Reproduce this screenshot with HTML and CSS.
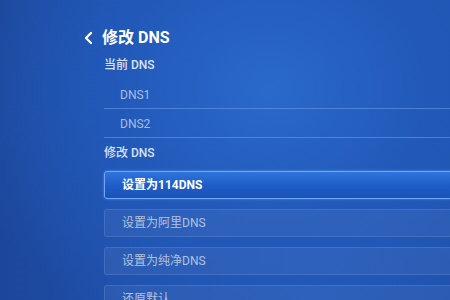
FILE: index.html
```html
<!DOCTYPE html>
<html lang="zh-CN">
<head>
<meta charset="utf-8">
<link rel="stylesheet" href="styles.css">
</head>
<body>
<div class="screen">
  <header class="header">
    <svg class="back" width="10" height="14" viewBox="0 0 10 14"><polyline points="8,2 3,7 8,12" fill="none" stroke="#fff" stroke-width="2.3" stroke-linecap="round" stroke-linejoin="round"/></svg>
    <h1 class="title">修改 DNS</h1>
  </header>
  <main class="content">
    <div class="section-label label-current">当前 DNS</div>
    <div class="info-list">
      <div class="info-row">DNS1</div>
      <div class="info-row">DNS2</div>
    </div>
    <div class="section-label label-edit">修改 DNS</div>
    <div class="buttons">
      <div class="btn btn-focused">设置为114DNS</div>
      <div class="btn">设置为阿里DNS</div>
      <div class="btn">设置为纯净DNS</div>
      <div class="btn">还原默认</div>
    </div>
  </main>
</div>
</body>
</html>
```
FILE: styles.css
```css
html, body {
  margin: 0;
  padding: 0;
  width: 450px;
  height: 300px;
  overflow: hidden;
}
body {
  font-family: Roboto, "Noto Sans CJK SC", sans-serif;
  background:
    radial-gradient(ellipse 70% 90% at 60% 30%, #2a69ca 0%, #2259b9 50%, rgba(30,75,160,0) 100%),
    linear-gradient(90deg, #1c4699 0%, #1f51ac 30%, #2259b7 70%, #1f52ad 100%);
}
.screen {
  height: 300px;
}
.header {
  display: flex;
  align-items: center;
  gap: 9px;
  padding: 28px 0 0 83px;
  height: 20px;
}
.back {
  display: block;
}
.title {
  margin: 0;
  font-size: 16px;
  line-height: 20px;
  font-weight: 700;
  color: #ffffff;
}
.content {
  padding-left: 104px;
  margin-right: -12px;
}
.section-label {
  font-size: 12px;
  line-height: 16px;
  color: #d9e2f5;
  font-weight: 500;
}
.label-current {
  margin-top: 9px;
}
.label-edit {
  margin-top: 7px;
}
.info-list {
  margin-top: 7px;
}
.info-row {
  font-size: 12px;
  line-height: 16px;
  color: #a9bde4;
  padding: 7px 0 5px 16px;
  border-bottom: 1px solid rgba(110, 160, 235, 0.55);
}
.buttons {
  display: flex;
  flex-direction: column;
  gap: 10px;
  margin-top: 10px;
}
.btn {
  height: 26px;
  line-height: 26px;
  padding-left: 17px;
  font-size: 12px;
  color: #b2c2e0;
  border: 1px solid rgba(110, 140, 205, 0.35);
  border-radius: 3px;
  background: rgba(130, 155, 205, 0.13);
}
.btn-focused {
  color: #ffffff;
  font-weight: 700;
  border: 1px solid #6ea8f6;
  background: linear-gradient(180deg, #2f74dc 0%, #1d5cc6 55%, #1a53b8 100%);
  box-shadow: 0 0 3px rgba(110, 175, 255, 0.6);
}
```
